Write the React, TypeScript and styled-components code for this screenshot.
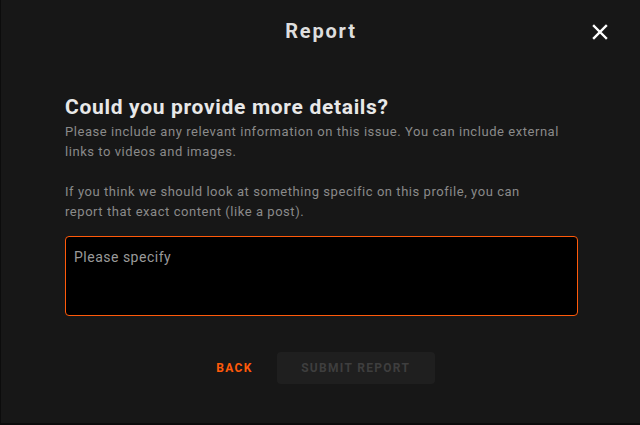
import React from "react";
import styled, { createGlobalStyle } from "styled-components";

const Global = createGlobalStyle`
  html, body { margin: 0; padding: 0; background: #0c0c0c; }
  body { font-family: Roboto, "Noto Sans", sans-serif; }
  * { box-sizing: border-box; }
`;

const Modal = styled.div`
  width: 639px;
  height: 423px;
  margin-left: 1px;
  background: #171717;
  display: flex;
  flex-direction: column;
  padding: 0 63px 0 64px;
`;

const Header = styled.div`
  height: 62px;
  display: flex;
  align-items: center;
  justify-content: center;
  position: relative;
`;

const Title = styled.h1`
  margin: 0;
  font-size: 20px;
  font-weight: 700;
  color: #dedede;
  letter-spacing: 1.8px;
`;

const Close = styled.button`
  position: absolute;
  right: -32px;
  top: 23px;
  width: 18px;
  height: 18px;
  padding: 0;
  border: none;
  background: transparent;
  display: flex;
  align-items: center;
  justify-content: center;
`;

const Heading = styled.h2`
  margin: 33px 0 0;
  font-size: 21px;
  line-height: 24px;
  font-weight: 700;
  color: #e8e8e8;
  letter-spacing: 0.68px;
`;

const Para = styled.p`
  margin: 0 0 20px;
  font-size: 13px;
  line-height: 20px;
  color: #8a8a8a;
  letter-spacing: 0.55px;
`;

const Body = styled.div`
  margin-top: 3px;
`;

const TextArea = styled.textarea`
  display: block;
  width: 513px;
  height: 80px;
  margin-top: -6px;
  background: #000;
  border: 1px solid #ff5a0a;
  border-radius: 4px;
  padding: 12px 8px;
  font-family: Roboto, "Noto Sans", sans-serif;
  font-size: 14px;
  letter-spacing: 0.5px;
  color: #ddd;
  resize: none;
  outline: none;
  &::placeholder { color: #9a9a9a; }
`;

const Actions = styled.div`
  margin-top: 36px;
  display: flex;
  justify-content: center;
  align-items: center;
  gap: 24px;
  padding-left: 9px;
`;

const TextButton = styled.button`
  background: transparent;
  border: none;
  padding: 0;
  font-family: Roboto, sans-serif;
  font-size: 12px;
  font-weight: 700;
  color: #ff5a0a;
  text-transform: uppercase;
  letter-spacing: 1.3px;
`;

const FilledButton = styled.button`
  width: 158px;
  height: 32px;
  border: none;
  border-radius: 4px;
  background: #1f1f1f;
  font-family: Roboto, sans-serif;
  font-size: 12px;
  font-weight: 700;
  color: #3e3e3e;
  text-transform: uppercase;
  letter-spacing: 1.3px;
`;

export default function App() {
  return (
    <>
      <Global />
      <Modal>
        <Header>
          <Title>Report</Title>
          <Close aria-label="close">
            <svg width="16" height="16" viewBox="0 0 16 16">
              <path d="M2 2 L14 14 M14 2 L2 14" stroke="#fff" strokeWidth="2.4" strokeLinecap="square" />
            </svg>
          </Close>
        </Header>
        <Heading>Could you provide more details?</Heading>
        <Body>
          <Para>
            Please include any relevant information on this issue. You can include external
            <br />
            links to videos and images.
          </Para>
          <Para>
            If you think we should look at something specific on this profile, you can
            <br />
            report that exact content (like a post).
          </Para>
        </Body>
        <TextArea placeholder="Please specify" />
        <Actions>
          <TextButton>Back</TextButton>
          <FilledButton>Submit report</FilledButton>
        </Actions>
      </Modal>
    </>
  );
}
